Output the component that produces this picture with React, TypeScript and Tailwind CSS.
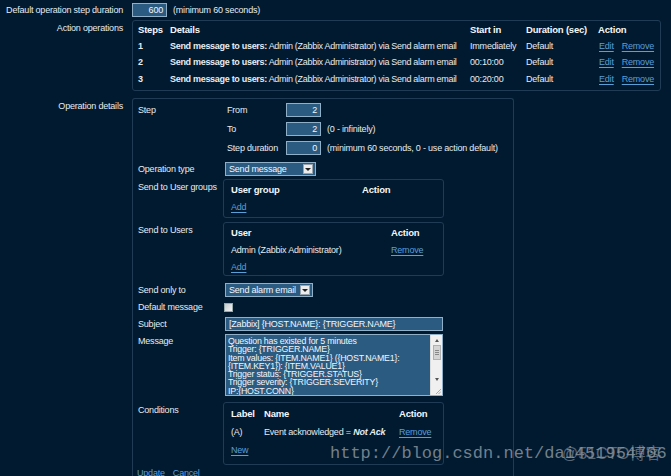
import React from "react";

const Link = ({ children, className = "" }: { children: React.ReactNode; className?: string }) => (
  <span className={"text-[#5b9fd8] underline underline-offset-[2px] decoration-[#5b9fd8] " + className}>{children}</span>
);

const Input = ({ value, w, align = "right" }: { value: string; w: string; align?: "right" | "left" }) => (
  <div
    className={
      "h-[14px] bg-[#2c5b82] border border-[#8fb0c8] text-[#f2f6fa] flex items-center " +
      (align === "right" ? "justify-end pr-[3px] " : "pl-[3px] ") +
      w
    }
  >
    {value}
  </div>
);

const Select = ({ value, w }: { value: string; w: string }) => (
  <div className={"h-[14px] bg-[#2c5b82] border border-[#8fb0c8] text-[#f2f6fa] flex items-center pl-[3px] pr-[2px] " + w}>
    <span>{value}</span>
    <div className="ml-auto w-[10px] h-[10px] bg-[#ececec] border border-[#9aa4ad] flex items-end justify-center pb-[2px]">
      <div className="w-0 h-0 border-l-[3px] border-r-[3px] border-t-[3px] border-l-transparent border-r-transparent border-t-[#222]" />
    </div>
  </div>
);

const Row = ({ label, children, className = "", labelClass = "" }: { label: string; children: React.ReactNode; className?: string; labelClass?: string }) => (
  <div className={"flex " + className}>
    <div className={"w-[85px] shrink-0 " + labelClass}>{label}</div>
    <div className="flex-1">{children}</div>
  </div>
);

export default function App() {
  const ops = [
    { n: "1", start: "Immediately" },
    { n: "2", start: "00:10:00" },
    { n: "3", start: "00:20:00" },
  ];
  return (
    <div className="w-[671px] h-[476px] overflow-hidden bg-[#011a2f] text-[#e6ecf1] text-[9px] leading-none tracking-[-0.2px] whitespace-nowrap relative font-['Liberation_Sans',Arial,sans-serif]">
      {/* Row 1 */}
      <div className="flex items-center pt-[3px]">
        <div className="w-[124px] text-right pr-[1px]">Default operation step duration</div>
        <div className="ml-[8px]">
          <Input value="600" w="w-[35px]" />
        </div>
        <div className="ml-[6px]">(minimum 60 seconds)</div>
      </div>

      {/* Action operations */}
      <div className="flex mt-[3px]">
        <div className="w-[124px] text-right pr-[1px] pt-[4px]">Action operations</div>
        <div className="ml-[8px] w-[529px] h-[71px] border border-[#1f3b56] rounded-[3px] pl-[5px]">
          <div className="grid grid-cols-[32px_300px_56px_72px_1fr] font-bold h-[17px] items-center text-[9.5px] text-[#f4f7fa]">
            <div>Steps</div>
            <div>Details</div>
            <div>Start in</div>
            <div>Duration (sec)</div>
            <div>Action</div>
          </div>
          {ops.map((o) => (
            <div key={o.n} className="grid grid-cols-[32px_300px_56px_72px_1fr] h-[16.5px] items-center">
              <div className="font-bold">{o.n}</div>
              <div className="tracking-[-0.3px]">
                <span className="font-bold">Send message to users:</span> Admin (Zabbix Administrator) via Send alarm email
              </div>
              <div>{o.start}</div>
              <div>Default</div>
              <div className="flex pl-[1px]">
                <Link>Edit</Link>
                <Link className="ml-[8px]">Remove</Link>
              </div>
            </div>
          ))}
        </div>
      </div>

      {/* Operation details */}
      <div className="flex mt-[7px]">
        <div className="w-[124px] text-right pr-[1px] pt-[4px]">Operation details</div>
        <div className="ml-[8px] w-[382px] h-[420px] border-l border-r border-t border-[#1f3b56] rounded-t-[3px] pl-[5px] pt-[4px]">
          {/* Step */}
          <Row label="Step" labelClass="pt-[3px]">
            <div className="pl-[4px]">
              {[
                { l: "From", v: "2", n: "" },
                { l: "To", v: "2", n: "(0 - infinitely)" },
                { l: "Step duration", v: "0", n: "(minimum 60 seconds, 0 - use action default)" },
              ].map((r, i) => (
                <div key={r.l} className={"flex items-center h-[14px] " + (i > 0 ? "mt-[5px]" : "")}>
                  <div className="w-[59px]">{r.l}</div>
                  <Input value={r.v} w="w-[35px]" />
                  {r.n && <div className="ml-[6px]">{r.n}</div>}
                </div>
              ))}
            </div>
          </Row>

          <Row label="Operation type" className="mt-[7px]" labelClass="pt-[3px]">
            <div className="pl-[2px]">
              <Select value="Send message" w="w-[91px]" />
            </div>
          </Row>

          <Row label="Send to User groups" className="mt-[3px]" labelClass="pt-[4px]">
            <div className="w-[221px] h-[39px] border border-[#1f3b56] rounded-[3px] pl-[7px]">
              <div className="flex h-[19px] items-center font-bold text-[9.5px] text-[#f4f7fa] pt-[1px]">
                <div className="w-[131px]">User group</div>
                <div>Action</div>
              </div>
              <div className="h-[16px] flex items-center">
                <Link>Add</Link>
              </div>
            </div>
          </Row>

          <Row label="Send to Users" className="mt-[4px]" labelClass="pt-[4px]">
            <div className="w-[221px] h-[54px] border border-[#1f3b56] rounded-[3px] pl-[7px]">
              <div className="flex h-[19px] items-center font-bold text-[9.5px] text-[#f4f7fa] pt-[1px]">
                <div className="w-[160px]">User</div>
                <div>Action</div>
              </div>
              <div className="flex h-[17px] items-center">
                <div className="w-[160px]">Admin (Zabbix Administrator)</div>
                <Link>Remove</Link>
              </div>
              <div className="h-[17px] flex items-center">
                <Link>Add</Link>
              </div>
            </div>
          </Row>

          <Row label="Send only to" className="mt-[7px]" labelClass="pt-[3px]">
            <div className="pl-[2px]">
              <Select value="Send alarm email" w="w-[88px]" />
            </div>
          </Row>

          <Row label="Default message" className="mt-[6px]" labelClass="pt-[0px]">
            <div className="pl-[1px]">
              <div className="w-[9px] h-[9px] border border-[#9aa] bg-gradient-to-br from-[#c8ccd0] to-[#f4f4f4]" />
            </div>
          </Row>

          <Row label="Subject" className="mt-[5px]" labelClass="pt-[3px]">
            <div className="pl-[2px]">
              <Input value="[Zabbix] {HOST.NAME}: {TRIGGER.NAME}" w="w-[218px]" align="left" />
            </div>
          </Row>

          <Row label="Message" className="mt-[3px]" labelClass="pt-[3px]">
            <div className="pl-[2px]">
              <div className="w-[218px] h-[62px] bg-[#2c5b82] border border-[#8fb0c8] flex overflow-hidden">
                <div className="flex-1 pl-[2px] pt-[2px] text-[#f2f6fa] text-[8.8px] leading-[8.3px] whitespace-pre">
                  {"Question has existed for 5 minutes\nTrigger: {TRIGGER.NAME}\nItem values: {ITEM.NAME1} ({HOST.NAME1}:\n{ITEM.KEY1}): {ITEM.VALUE1}\nTrigger status: {TRIGGER.STATUS}\nTrigger severity: {TRIGGER.SEVERITY}\nIP:{HOST.CONN}"}
                </div>
                <div className="w-[12px] bg-[#f0f0f0] border-l border-[#dcdcdc] flex flex-col items-center relative">
                  <div className="mt-[4px] w-0 h-0 border-l-[2.5px] border-r-[2.5px] border-b-[3px] border-l-transparent border-r-transparent border-b-[#555]" />
                  <div className="mt-[3px] w-[8px] h-[15px] bg-[#d4d4d4] border border-[#b0b0b0] flex flex-col items-center justify-center gap-[1px]">
                    <div className="w-[4px] h-px bg-[#888]" />
                    <div className="w-[4px] h-px bg-[#888]" />
                    <div className="w-[4px] h-px bg-[#888]" />
                  </div>
                  <div className="mt-[18px] w-0 h-0 border-l-[2.5px] border-r-[2.5px] border-t-[3px] border-l-transparent border-r-transparent border-t-[#555]" />
                  <svg className="absolute bottom-[1px] right-[1px]" width="6" height="6" viewBox="0 0 6 6">
                    <path d="M1 6 L6 1 M3.5 6 L6 3.5" stroke="#999" strokeWidth="0.8" />
                  </svg>
                </div>
              </div>
            </div>
          </Row>

          <Row label="Conditions" className="mt-[6px]" labelClass="pt-[4px]">
            <div className="w-[221px] h-[63px] border border-[#1f3b56] rounded-[3px] pl-[7px]">
              <div className="flex h-[21px] items-center font-bold text-[9.5px] text-[#f4f7fa] pt-[1px]">
                <div className="w-[33px]">Label</div>
                <div className="w-[135px]">Name</div>
                <div>Action</div>
              </div>
              <div className="flex h-[17px] items-center">
                <div className="w-[33px]">(A)</div>
                <div className="w-[135px]">
                  Event acknowledged = <span className="italic font-bold">Not Ack</span>
                </div>
                <Link>Remove</Link>
              </div>
              <div className="h-[19px] flex items-center">
                <Link>New</Link>
              </div>
            </div>
          </Row>

          <div className="flex mt-[3px] -ml-[1px] h-[10px] items-center">
            <Link className="no-underline">Update</Link>
            <Link className="ml-[8px] no-underline">Cancel</Link>
          </div>
        </div>
      </div>

      {/* Watermark */}
      <div className="absolute left-[330px] top-[445px] text-[17px] leading-none tracking-normal text-[#8f99a3] opacity-80 font-['Liberation_Mono','DejaVu_Sans_Mono',monospace] whitespace-pre">
        http://blog.csdn.net/dai451954706
      </div>
      <div className="absolute left-[562px] top-[446px] text-[16px] leading-none tracking-normal text-[#8f99a3] opacity-60 font-['Liberation_Sans','Noto_Sans_CJK_SC',sans-serif] whitespace-pre">
        @51CTO博客
      </div>
    </div>
  );
}
